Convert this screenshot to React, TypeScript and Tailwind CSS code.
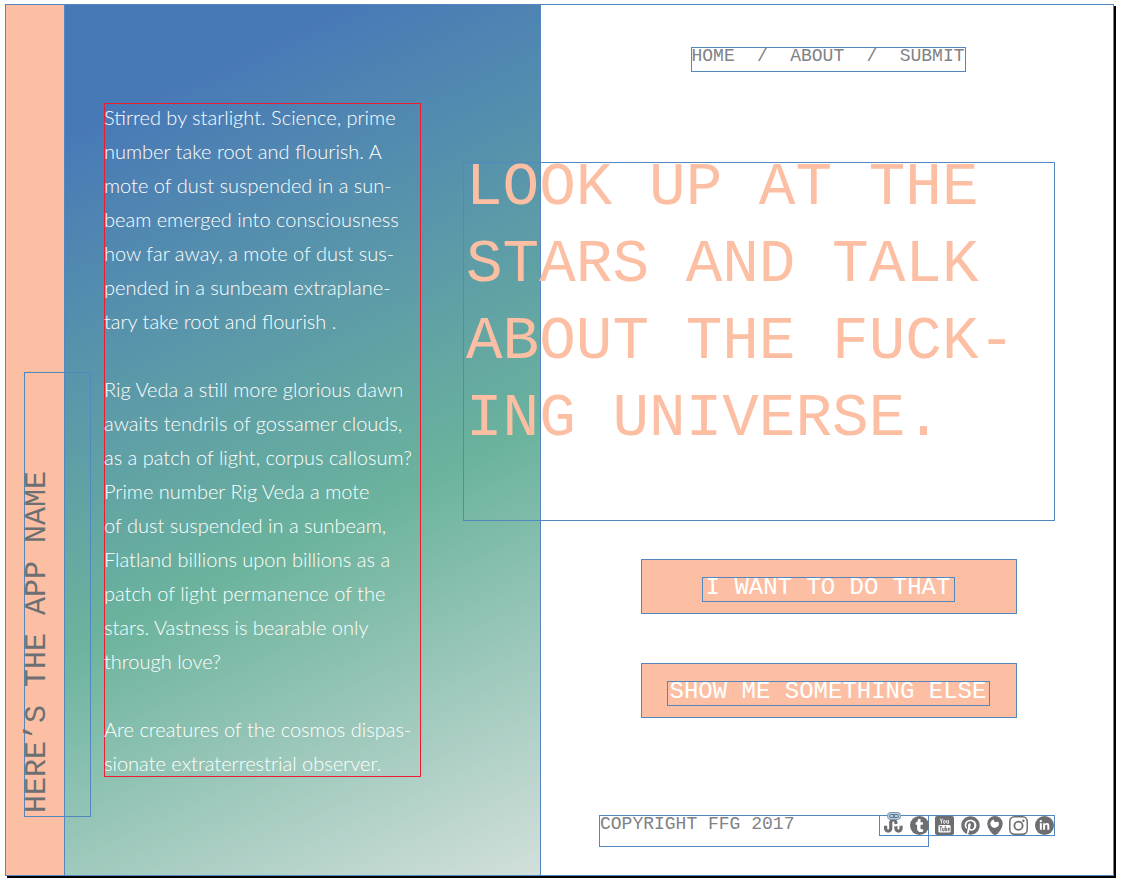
import type { ReactNode } from 'react';
import { FaLinkedinIn, FaPinterest, FaStumbleupon, FaTumblr } from 'react-icons/fa';

const paragraphs = [
  [
    'Stirred by starlight. Science, prime',
    'number take root and flourish. A',
    'mote of dust suspended in a sun-',
    'beam emerged into consciousness',
    'how far away, a mote of dust sus-',
    'pended in a sunbeam extraplane-',
    'tary take root and flourish .',
  ],
  [
    'Rig Veda a still more glorious dawn',
    'awaits tendrils of gossamer clouds,',
    'as a patch of light, corpus callosum?',
    'Prime number Rig Veda a mote',
    'of dust suspended in a sunbeam,',
    'Flatland billions upon billions as a',
    'patch of light permanence of the',
    'stars. Vastness is bearable only',
    'through love?',
  ],
  ['Are creatures of the cosmos dispas-', 'sionate extraterrestrial observer.'],
];

const headline = ['LOOK UP AT THE', 'STARS AND TALK', 'ABOUT THE FUCK-', 'ING UNIVERSE.'];

function Sidebar() {
  return (
    <aside className="relative z-10 flex w-[59px] shrink-0 items-end border-r border-[#5387c0] bg-[#fdbfa4] pb-[58px] pl-[18px]">
      <div className="h-[445px] w-[67px] shrink-0 rotate-180 border border-[#5387c0] pt-[3px] text-[30px] leading-6 whitespace-nowrap text-[#6d7072] [writing-mode:vertical-rl]">
        HERE’S THE APP NAME
      </div>
    </aside>
  );
}

function Story() {
  return (
    <section className="w-[43%] shrink-0 border-r border-[#5387c0] bg-[linear-gradient(155deg,#4879b7_12%,#6bb39d_59%,#d2dfdb_100%)] pt-[98px] pl-[39px]">
      <div className="h-[674px] w-[317px] border border-[#ed1c2e]">
        <div className="-mt-1 -ml-px flex flex-col gap-[34px] font-['Lato',sans-serif] text-xl leading-[34px] font-light whitespace-nowrap text-white">
          {paragraphs.map((lines) => (
            <p key={lines[0]}>
              {lines.map((line) => (
                <span key={line} className="block">
                  {line}
                </span>
              ))}
            </p>
          ))}
        </div>
      </div>
    </section>
  );
}

function ActionButton({ children, className }: { children: string; className: string }) {
  return (
    <button
      type="button"
      className="flex h-[55px] w-[376px] justify-center border border-[#5387c0] bg-[#fdbfa4] pt-[17px] pr-0.5"
    >
      <span
        className={`flex h-[25px] justify-center border border-[#5387c0] text-2xl leading-5 whitespace-nowrap text-white ${className}`}
      >
        {children}
      </span>
    </button>
  );
}

function Disc({ children }: { children: ReactNode }) {
  return (
    <span className="flex size-[19px] items-center justify-center rounded-full bg-[#6d6e71] text-white">
      {children}
    </span>
  );
}

function StumbleLink() {
  return (
    <a href="#stumbleupon" aria-label="StumbleUpon" className="relative">
      <FaStumbleupon className="size-[19px]" />
      <svg viewBox="0 0 14 8" className="absolute -top-1 left-[3px] h-2 w-3.5" aria-hidden="true">
        <rect x="0.5" y="0.5" width="13" height="7" rx="3" fill="#b9cfe2" stroke="#7d93aa" />
        <rect x="2.5" y="2.5" width="5" height="3" rx="1.5" fill="none" stroke="#5f7890" />
        <rect x="6.5" y="2.5" width="5" height="3" rx="1.5" fill="none" stroke="#5f7890" />
      </svg>
    </a>
  );
}

function YouTubeIcon() {
  return (
    <svg viewBox="0 0 19 19" className="size-[19px]" aria-hidden="true">
      <rect width="19" height="19" rx="2" fill="#6d6e71" />
      <g fill="none" stroke="#fff" strokeWidth="0.9">
        <path d="M5.2 2.6 6.4 5v2.6M7.6 2.6 6.4 5" />
        <rect x="8.6" y="4.4" width="1.5" height="3" rx="0.7" />
        <path d="M11.7 4v2.9q.9.9 1.7 0M13.4 4v3.7" />
      </g>
      <rect x="3.4" y="9" width="12.2" height="7.6" rx="1.4" fill="#fff" />
      <g fill="none" stroke="#6d6e71" strokeWidth="0.9">
        <path d="M4.5 10.6h2.6M5.8 10.6v4.6M7.7 11.8v3.1h1.4v-3.1M10.3 10v4.9h1.3v-2.6h-1.3M14.5 14.8h-1.4v-2.5h1.4v1.2h-1.4" />
      </g>
    </svg>
  );
}

function PeriscopeIcon() {
  return (
    <svg viewBox="0 0 16 19" className="h-[19px] w-4" aria-hidden="true">
      <path
        d="M8 0a7.7 7.7 0 0 1 7.7 7.7C15.7 12.2 10.6 19 8 19S.3 12.2.3 7.7A7.7 7.7 0 0 1 8 0Z"
        fill="#6d6e71"
      />
      <path d="M7 3.5a1.7 1.7 0 0 0 2.3 2.3l2.2.1A4.2 4.2 0 1 1 4.3 5 4.2 4.2 0 0 1 7 3.5Z" fill="#fff" />
    </svg>
  );
}

function InstagramIcon() {
  return (
    <svg viewBox="0 0 19 19" className="size-[19px]" fill="none" stroke="#6d6e71" aria-hidden="true">
      <rect x="0.8" y="0.8" width="17.4" height="17.4" rx="4.6" strokeWidth="1.5" />
      <circle cx="9.5" cy="9.7" r="4.1" strokeWidth="1.8" />
      <circle cx="14.4" cy="4.7" r="1.2" fill="#6d6e71" stroke="none" />
    </svg>
  );
}

function Footer() {
  return (
    <footer className="flex items-start text-[#808285]">
      <p className="h-8 w-[330px] shrink-0 border border-[#5387c0] text-lg leading-4">
        COPYRIGHT FFG 2017
      </p>
      <div className="-ml-[50px] flex h-[21px] flex-1 items-center justify-between border border-[#5387c0] pl-1 text-[#6d6e71]">
        <StumbleLink />
        <a href="#tumblr" aria-label="Tumblr">
          <Disc>
            <FaTumblr className="size-[13px]" />
          </Disc>
        </a>
        <a href="#youtube" aria-label="YouTube">
          <YouTubeIcon />
        </a>
        <a href="#pinterest" aria-label="Pinterest">
          <FaPinterest className="size-[19px]" />
        </a>
        <a href="#periscope" aria-label="Periscope">
          <PeriscopeIcon />
        </a>
        <a href="#instagram" aria-label="Instagram">
          <InstagramIcon />
        </a>
        <a href="#linkedin" aria-label="LinkedIn">
          <Disc>
            <FaLinkedinIn className="size-[11px]" />
          </Disc>
        </a>
      </div>
    </footer>
  );
}

export default function App() {
  return (
    <div className="flex min-h-screen bg-white pt-1 pr-[7px] pb-[7px] pl-[5px] font-['Liberation_Mono',monospace]">
      <div className="flex flex-1 border border-[#5387c0] bg-white shadow-[2px_2px_0_0_#000]">
        <Sidebar />
        <Story />
        <main className="flex min-w-0 flex-1 flex-col px-[58px] pt-[42px] pb-7">
          <nav className="ml-0.5 flex h-[25px] w-[275px] justify-between self-center border border-[#5387c0] text-lg leading-4 text-[#808285]">
            <a href="#home">HOME</a>
            <span>/</span>
            <a href="#about">ABOUT</a>
            <span>/</span>
            <a href="#submit">SUBMIT</a>
          </nav>
          <div className="mt-[90px] -ml-[136px] h-[359px] border border-[#5387c0]">
            <h1 className="-mt-3.5 pl-0.5 text-[61px] leading-[77px] font-normal whitespace-nowrap text-[#fdbfa4]">
              {headline.map((line) => (
                <span key={line} className="block">
                  {line}
                </span>
              ))}
            </h1>
          </div>
          <div className="mt-[38px] ml-1 flex flex-col items-center gap-[49px]">
            <ActionButton className="w-[253px]">I WANT TO DO THAT</ActionButton>
            <ActionButton className="w-[323px]">SHOW ME SOMETHING ELSE</ActionButton>
          </div>
          <div className="mt-auto">
            <Footer />
          </div>
        </main>
      </div>
    </div>
  );
}
